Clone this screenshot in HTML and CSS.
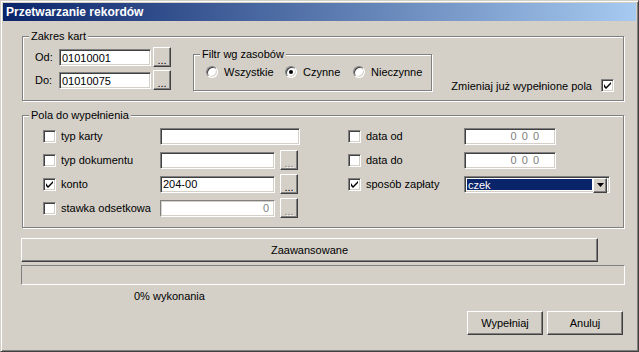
FILE: index.html
```html
<!doctype html>
<html lang="pl">
    <head>
        <meta charset="UTF-8" />
        <meta name="viewport" content="width=device-width, initial-scale=1.0" />
        <title>Przetwarzanie rekordów</title>
        <link rel="stylesheet" href="styles.css">
    </head>
    <body>
        <div class="window">
            <div class="titlebar">Przetwarzanie rekordów</div>

            <div class="client">
                <div class="group range">
                    <span class="group-title">Zakres kart</span>

                    <div class="range-fields">
                        <div class="range-row">
                            <label class="range-label">Od:</label>
                            <input class="edit range-edit" value="01010001" />
                            <button class="btn dots">...</button>
                        </div>
                        <div class="range-row">
                            <label class="range-label">Do:</label>
                            <input class="edit range-edit" value="01010075" />
                            <button class="btn dots">...</button>
                        </div>
                    </div>

                    <div class="group filter">
                        <span class="group-title">Filtr wg zasobów</span>
                        <div class="radios">
                            <label class="radio-item first"><span class="radio"></span>Wszystkie</label>
                            <label class="radio-item second"><span class="radio on"></span>Czynne</label>
                            <label class="radio-item"><span class="radio"></span>Nieczynne</label>
                        </div>
                    </div>

                    <label class="overwrite">
                        Zmieniaj już wypełnione pola
                        <span class="check on">
                            <svg viewBox="0 0 7 7" width="7" height="7"><path d="M0 2L0 5L2 7L7 2L7 0L2 5Z" fill="#000"/></svg>
                        </span>
                    </label>
                </div>

                <div class="group fill">
                    <span class="group-title">Pola do wypełnienia</span>

                    <div class="fill-col left">
                        <div class="fill-row">
                            <span class="check"></span>
                            <span class="fill-label">typ karty</span>
                            <input class="edit long" value="" />
                        </div>
                        <div class="fill-row">
                            <span class="check"></span>
                            <span class="fill-label">typ dokumentu</span>
                            <input class="edit short" value="" />
                            <button class="btn dots off">...</button>
                        </div>
                        <div class="fill-row">
                            <span class="check on">
                                <svg viewBox="0 0 7 7" width="7" height="7"><path d="M0 2L0 5L2 7L7 2L7 0L2 5Z" fill="#000"/></svg>
                            </span>
                            <span class="fill-label">konto</span>
                            <input class="edit short" value="204-00" />
                            <button class="btn dots">...</button>
                        </div>
                        <div class="fill-row">
                            <span class="check"></span>
                            <span class="fill-label">stawka odsetkowa</span>
                            <input class="edit short number off" value="0" />
                            <button class="btn dots off">...</button>
                        </div>
                    </div>

                    <div class="fill-col right">
                        <div class="fill-row">
                            <span class="check"></span>
                            <span class="fill-label narrow">data od</span>
                            <input class="edit date" value="0 0 0" />
                        </div>
                        <div class="fill-row">
                            <span class="check"></span>
                            <span class="fill-label narrow">data do</span>
                            <input class="edit date" value="0 0 0" />
                        </div>
                        <div class="fill-row">
                            <span class="check on">
                                <svg viewBox="0 0 7 7" width="7" height="7"><path d="M0 2L0 5L2 7L7 2L7 0L2 5Z" fill="#000"/></svg>
                            </span>
                            <span class="fill-label narrow">sposób zapłaty</span>
                            <div class="combo">
                                <span class="combo-value">czek</span>
                                <span class="combo-arrow">
                                    <svg viewBox="0 0 7 4" width="7" height="4"><path d="M0 0H7L3.5 4Z" fill="#000"/></svg>
                                </span>
                            </div>
                        </div>
                    </div>
                </div>

                <button class="btn advanced">Zaawansowane</button>
                <div class="progress"></div>
                <div class="progress-text">0% wykonania</div>

                <div class="actions">
                    <button class="btn action">Wypełniaj</button>
                    <button class="btn action">Anuluj</button>
                </div>
            </div>
        </div>
    </body>
</html>
```

FILE: styles.css
```css
* {
    box-sizing: border-box;
}
body {
    margin: 0;
    background-color: #d4d0c8;
    font-family: "Liberation Sans", Arial, sans-serif;
    font-size: 11px;
    color: #000;
}
.window {
    width: 639px;
    height: 352px;
    padding: 2px;
    background-color: #d4d0c8;
    border: 1px solid;
    border-color: #d4d0c8 #404040 #404040 #d4d0c8;
    box-shadow: inset 1px 1px #fff, inset -1px -1px #808080;
    display: flex;
    flex-direction: column;
}
.titlebar {
    height: 18px;
    line-height: 18px;
    padding-left: 3px;
    font-size: 12px;
    font-weight: bold;
    color: #fff;
    background: linear-gradient(to right, #0a246a, #a6caf0);
}
.client {
    display: flex;
    flex-direction: column;
    padding-left: 19px;
}

/* etched group boxes */
.group {
    position: relative;
    border: 1px solid #808080;
    box-shadow: inset 1px 1px #fff, 1px 1px #fff;
}
.group-title {
    position: absolute;
    top: -7px;
    left: 6px;
    padding: 0 2px;
    line-height: 13px;
    background-color: #d4d0c8;
}
.range {
    margin-top: 15px;
    width: 602px;
    height: 65px;
    padding: 10px 0 0 12px;
    display: flex;
    align-items: flex-start;
}
.range-fields {
    display: flex;
    flex-direction: column;
    gap: 3px;
}
.range-row {
    display: flex;
    align-items: flex-start;
    height: 20px;
}
.range-label {
    width: 24px;
    line-height: 20px;
}
.range-edit {
    width: 92px;
    margin-top: 2px;
    margin-right: 2px;
}
.filter {
    margin: 7px 0 0 22px;
    width: 239px;
    height: 37px;
}
.radios {
    display: flex;
    padding: 11px 0 0 12px;
}
.radio-item {
    display: flex;
    align-items: center;
    gap: 6px;
    height: 12px;
}
.radio-item.first {
    width: 79px;
}
.radio-item.second {
    width: 68px;
}
.radio {
    position: relative;
    width: 12px;
    height: 12px;
    border-radius: 50%;
    border: 1px solid;
    border-color: #808080 #fff #fff #808080;
    box-shadow: inset 1px 1px #404040, inset -1px -1px #d4d0c8;
    background-color: #fff;
}
.radio.on::after {
    content: "";
    position: absolute;
    left: 3px;
    top: 3px;
    width: 4px;
    height: 4px;
    border-radius: 50%;
    background-color: #000;
}
.overwrite {
    margin: 0 9px 8px auto;
    align-self: flex-end;
    display: flex;
    align-items: center;
    gap: 9px;
}

/* checkbox */
.check {
    width: 13px;
    height: 13px;
    flex: none;
    border: 1px solid;
    border-color: #808080 #fff #fff #808080;
    box-shadow: inset 1px 1px #404040, inset -1px -1px #d4d0c8;
    background-color: #fff;
    display: flex;
    align-items: center;
    justify-content: center;
}
.check svg {
    display: block;
}

/* fields group */
.fill {
    margin-top: 14px;
    width: 602px;
    height: 113px;
    padding: 10px 0 0 20px;
    display: flex;
}
.fill-col {
    display: flex;
    flex-direction: column;
    gap: 4px;
}
.fill-col.left {
    width: 305px;
}
.fill-row {
    display: flex;
    align-items: center;
    height: 20px;
}
.fill-row .check {
    margin-right: 5px;
}
.fill-label {
    width: 99px;
    white-space: nowrap;
}
.fill-label.narrow {
    width: 98px;
}

/* sunken edit */
.edit {
    height: 17px;
    padding: 0 2px;
    border: 1px solid;
    border-color: #808080 #fff #fff #808080;
    box-shadow: inset 1px 1px #404040, inset -1px -1px #d4d0c8;
    background-color: #fff;
    font-family: inherit;
    font-size: 11px;
    color: #000;
    outline: none;
}
.edit.long {
    width: 140px;
}
.edit.short {
    width: 115px;
}
.edit.number {
    text-align: right;
    padding-right: 5px;
}
.edit.off {
    color: #808080;
    box-shadow: inset 1px 1px #d4d0c8, inset -1px -1px #d4d0c8;
}
.edit.date {
    width: 92px;
    text-align: right;
    padding-right: 16px;
    color: #808080;
    word-spacing: 2px;
}
.combo {
    width: 146px;
    height: 17px;
    padding: 2px;
    display: flex;
    border: 1px solid;
    border-color: #808080 #fff #fff #808080;
    box-shadow: inset 1px 1px #404040, inset -1px -1px #d4d0c8;
    background-color: #fff;
}
.combo-value {
    flex: 1;
    line-height: 13px;
    padding-left: 1px;
    color: #fff;
    background-color: #0a246a;
}
.combo-value + .combo-arrow {
    margin-left: 1px;
}
.combo-arrow {
    width: 14px;
    margin-top: -1px;
    height: 15px;
    display: flex;
    align-items: center;
    justify-content: center;
    background-color: #d4d0c8;
    border: 1px solid;
    border-color: #fff #404040 #404040 #fff;
    box-shadow: inset -1px -1px #808080;
}

/* raised button */
.btn {
    padding: 0;
    border: 1px solid;
    border-color: #fff #404040 #404040 #fff;
    box-shadow: inset -1px -1px #808080;
    background-color: #d4d0c8;
    font-family: inherit;
    font-size: 11px;
    color: #000;
}
.dots {
    width: 18px;
    height: 20px;
    line-height: 20px;
    padding-top: 2px;
}
.fill-row .dots {
    margin-left: 5px;
}
.dots.off {
    color: #808080;
    text-shadow: 1px 1px #fff;
}
.advanced {
    margin: 10px 0 0 -1px;
    width: 577px;
    height: 24px;
}
.progress {
    margin: 3px 0 0 -1px;
    width: 604px;
    height: 20px;
    border: 1px solid;
    border-color: #808080 #fff #fff #808080;
}
.progress-text {
    margin-top: 5px;
    padding-left: 112px;
    line-height: 13px;
}
.actions {
    margin-top: 8px;
    padding-right: 13px;
    display: flex;
    justify-content: flex-end;
    gap: 4px;
}
.action {
    width: 76px;
    height: 24px;
}
```
